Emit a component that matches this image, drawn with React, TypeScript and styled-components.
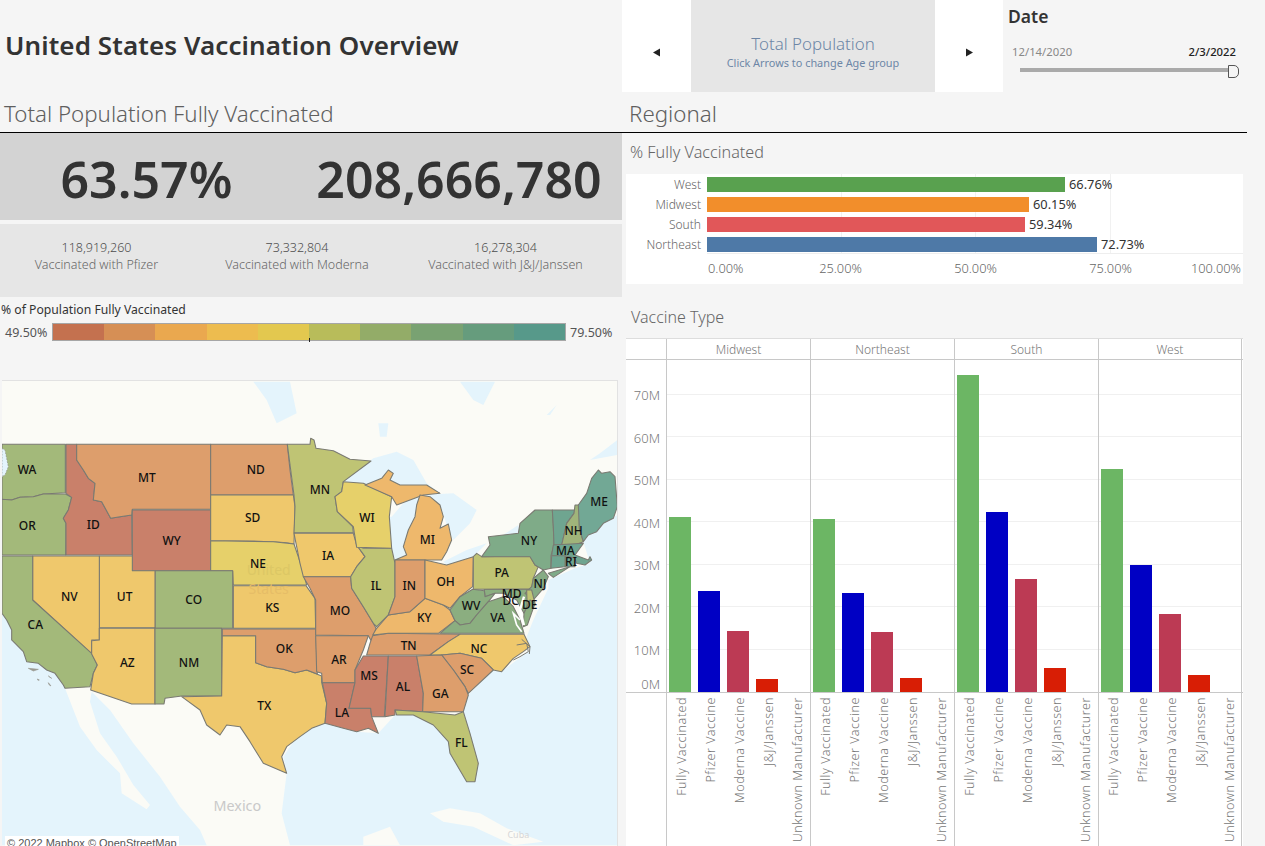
import React from "react";
import styled, { createGlobalStyle } from "styled-components";

const FONT = `"Noto Sans", "Open Sans", sans-serif`;

const Global = createGlobalStyle`
  html, body { margin: 0; padding: 0; background: #f5f5f5; }
  * { box-sizing: border-box; }
`;

const Page = styled.div`
  width: 1265px; height: 846px; overflow: hidden; display: flex;
  background: #f5f5f5; font-family: ${FONT}; color: #555;
`;
const LeftCol = styled.div`width: 622px; display: flex; flex-direction: column; flex: none;`;
const RightCol = styled.div`width: 643px; display: flex; flex-direction: column; flex: none;`;
const TitleBar = styled.div`height: 92px; display: flex; align-items: center; padding: 0 0 2px 5px;`;
const Title = styled.h1`
  margin: 0; font-size: 26px; font-weight: 600; color: #333; letter-spacing: 0.1px; white-space: nowrap;
`;
const SectionHead = styled.div<{ $pad: number; $w: number }>`
  height: 41px; width: ${p => p.$w}px; padding-left: ${p => p.$pad}px; border-bottom: 1px solid #000;
  font-size: 22.3px; font-weight: 300; color: #5f5f5f; line-height: 43px; white-space: nowrap;
`;
const KpiBand = styled.div`
  height: 87px; background: #d3d3d3; display: flex; align-items: center;
  font-size: 50px; font-weight: 600; color: #333; line-height: 1; padding-top: 5px;
`;
const KpiPct = styled.div`width: 293px; text-align: center;`;
const KpiCount = styled.div`width: 329px; text-align: center; padding-left: 3px; white-space: nowrap;`;
const SubBand = styled.div`
  margin-top: 4px; height: 73px; background: #e6e6e6; display: grid;
  grid-template-columns: 193px 208px 209px; padding-top: 15px;
`;
const SubCell = styled.div`text-align: center; font-size: 12.5px; font-weight: 300; line-height: 17px; color: #666; white-space: nowrap;`;
const SubNum = styled.div`color: #4d4d4d; font-size: 12.5px;`;
const LegendTitle = styled.div`
  margin: 5px 0 0 1px; font-size: 12.2px; line-height: 16px; color: #333; font-weight: 400; white-space: nowrap;
`;
const LegendRow = styled.div`
  margin-top: 5px; height: 18px; display: flex; align-items: center;
  font-size: 12.5px; color: #555;
`;
const LegendLow = styled.div`width: 52px; padding-left: 5px;`;
const LegendHigh = styled.div`padding-left: 4px;`;
const Ramp = styled.div`
  position: relative; width: 514px; height: 18px; display: flex; border: 1px solid #a6a6a6;
  &::after { content: ""; position: absolute; left: 256px; bottom: -2px; width: 1px; height: 4px; background: #222; }
`;
const RampStep = styled.div<{ $c: string }>`flex: 1; background: ${p => p.$c};`;
const MapFrame = styled.div`
  position: relative; margin: 39px 0 0 2px; width: 616px; height: 466px; overflow: hidden;
  border-top: 1px solid #e2e2e2; border-right: 1px solid #e2e2e2; background: #fbfbf6;
`;
const MapSvg = styled.svg`display: block; width: 616px; height: 465px;`;
const Attribution = styled.div`
  position: absolute; left: 3px; bottom: -4px; padding: 0 2px; background: #fff; font-size: 11px; line-height: 14px;
  font-family: "Liberation Sans", Arial, sans-serif; color: #555; white-space: nowrap;
`;

const NavRow = styled.div`height: 92px; display: flex;`;
const NavArrow = styled.div`
  background: #fff; width: 69px; display: flex; align-items: center; justify-content: center; font-size: 0; padding-top: 12px;
`;
const NavArrowRight = styled(NavArrow)`width: 68px;`;
const NavCenter = styled.div`
  width: 244px; background: #e6e6e6; display: flex; flex-direction: column; align-items: center; padding-top: 33px;
  color: #6d86a6; white-space: nowrap;
`;
const NavTitle = styled.div`font-size: 16.9px; line-height: 22px; font-weight: 300;`;
const NavSub = styled.div`font-size: 10.9px; line-height: 15px;`;
const DatePanel = styled.div`flex: 1; padding: 4px 0 0 5px;`;
const DateTitle = styled.div`font-size: 17.5px; font-weight: 600; color: #333; line-height: 24px;`;
const DateValues = styled.div`
  width: 224px; margin: 16px 0 0 4px; display: flex; justify-content: space-between;
  font-size: 11.3px; line-height: 15px; color: #888;
`;
const DateEnd = styled.span`color: #222; font-weight: 500;`;
const Slider = styled.div`
  position: relative; margin: 9px 0 0 12px; width: 212px; height: 4px; background: #aaa;
  &::after { content: ""; position: absolute; right: -7px; top: -3px; width: 9px; height: 11px;
    background: #f5f5f5; border: 1px solid #555; border-radius: 0 5px 5px 0; }
`;

const ChartTitle = styled.div`
  margin: 8px 0 0 8px; font-size: 16.2px; line-height: 22px; color: #666; font-weight: 300; white-space: nowrap;
`;
const BarPanel = styled.div`
  margin: 11px 0 0 4px; width: 617px; height: 110px; background: #fff; display: flex; flex-direction: column;
`;
const BarPlot = styled.div`
  position: relative; margin-left: 81px; height: 80px; padding-top: 3px; display: flex; flex-direction: column;
  gap: 5px; border-bottom: 1px solid #eee;
`;
const GridV = styled.div<{ $l: number }>`position: absolute; top: 0; bottom: 0; left: ${p => p.$l}px; width: 1px; background: #f1f1f1;`;
const BarLine = styled.div`position: relative; height: 15px; display: flex; align-items: center; z-index: 1;`;
const BarName = styled.div`
  position: absolute; right: 100%; padding-right: 6px; font-size: 12px; color: #666; line-height: 15px; font-weight: 300;
`;
const Bar = styled.div<{ $c: string }>`height: 15px; background: ${p => p.$c};`;
const BarVal = styled.div`padding-left: 4px; font-size: 12.8px; color: #333; line-height: 15px;`;
const BarAxis = styled.div`
  margin: 0 2px 0 82px; display: grid; grid-template-columns: 65px 135px 135px 135px 1fr; font-size: 12.8px; font-weight: 300; color: #666;
  line-height: 15px; padding-top: 7px; text-align: center;
  & > :first-child { text-align: left; }
  & > :last-child { text-align: right; }
`;
const SectionGap = styled.div`height: 22px;`;
const TypeTitle = styled(ChartTitle)`margin: 0 0 0 9px; font-size: 16px;`;
const TypePanel = styled.div`margin: 10px 0 0 4px; width: 617px; height: 508px; background: #fff; display: flex; flex-direction: column;`;
const HeaderRow = styled.div`
  height: 22px; display: grid; grid-template-columns: 40px repeat(4, 144px); border-bottom: 1px solid #c8c8c8; flex: none;
  border-top: 1px solid #ddd;
`;
const HeaderCell = styled.div`
  border-left: 1px solid #c8c8c8; font-size: 12px; color: #777; font-weight: 300; text-align: center; line-height: 21px;
  &:last-child { border-right: 1px solid #c8c8c8; }
`;
const PlotRow = styled.div`height: 333px; display: grid; grid-template-columns: 40px repeat(4, 144px); border-bottom: 1px solid #c8c8c8; flex: none;`;
const YAxis = styled.div`position: relative;`;
const YTick = styled.div`
  position: absolute; right: 6px; font-size: 13px; font-weight: 300; color: #777; line-height: 14px;
`;
const Facet = styled.div`
  position: relative; border-left: 1px solid #c8c8c8; display: flex; align-items: flex-end; gap: 7px; padding-left: 2px;
  &:last-child { border-right: 1px solid #c8c8c8; }
`;
const GridH = styled.div<{ $b: number }>`position: absolute; left: 0; right: 0; bottom: ${p => p.$b}px; height: 1px; background: #f0f0f0;`;
const VBar = styled.div<{ $c: string }>`position: relative; width: 22px; flex: none; background: ${p => p.$c};`;
const LabelRow = styled.div`flex: 1; display: grid; grid-template-columns: 40px repeat(4, 144px); min-height: 0;`;
const LabelFacet = styled.div`
  border-left: 1px solid #c8c8c8; display: flex;
  &:last-child { border-right: 1px solid #c8c8c8; }
`;
const VLabel = styled.div`
  width: 29px; flex: none; padding-top: 4px; display: flex; justify-content: center; align-items: flex-start;
  font-size: 12.5px; font-weight: 300; color: #777;
`;
const VText = styled.span`
  writing-mode: vertical-rl; transform: rotate(180deg); white-space: nowrap; line-height: 15px; letter-spacing: 0.55px;
`;

const ramp = ["#c4714f", "#d68f55", "#eaa84f", "#edbc4f", "#e3c84f", "#b8bc5a", "#93ac68", "#79a272", "#669c7d", "#57998a"];

const regions = [
  { n: "West", v: 66.76, c: "#59a14f" },
  { n: "Midwest", v: 60.15, c: "#f28e2b" },
  { n: "South", v: 59.34, c: "#e15759" },
  { n: "Northeast", v: 72.73, c: "#4e79a7" },
];

const vColors = ["#6cb664", "#0000c4", "#bc3a54", "#d81e05"];
const vNames = ["Fully Vaccinated", "Pfizer Vaccine", "Moderna Vaccine", "J&J/Janssen", "Unknown Manufacturer"];
const facets = [
  { n: "Midwest", h: [175, 101, 61, 13] },
  { n: "Northeast", h: [173, 99, 60, 14] },
  { n: "South", h: [317, 180, 113, 24] },
  { n: "West", h: [223, 127, 78, 17] },
];
const yTicks = [
  { l: "70M", t: 28 }, { l: "60M", t: 71 }, { l: "50M", t: 113 }, { l: "40M", t: 156 },
  { l: "30M", t: 198 }, { l: "20M", t: 241 }, { l: "10M", t: 283 }, { l: "0M", t: 317 },
];

const C = {
  g1: "#a3b97a", r: "#c9806a", o: "#dd9e6c", y: "#efc86c", y2: "#e6d06a", g2: "#bfc474",
  o2: "#eeb86c", g3: "#8bae80", g4: "#7fab88", t1: "#6fa590", t2: "#72a895", g5: "#a0b47a", g6: "#86ab84",
};

const west: [string, string][] = [
  ["WA", "6,193 196,193 196,338 130,342 100,350 60,352 35,360 6,358"],
  ["OR", "6,358 35,360 60,352 100,350 130,342 196,342 215,352 205,390 190,415 198,430 197,525 6,525"],
  ["ID", "198,193 230,193 230,240 250,270 265,295 285,310 280,360 305,365 332,415 360,410 395,405 397,525 198,525 198,430 190,415 205,390 215,352 198,340"],
  ["MT", "230,193 632,193 632,388 397,388 395,405 360,410 332,415 305,365 280,360 285,310 265,295 250,270 230,240"],
  ["WY", "397,390 632,390 632,572 397,572"],
  ["ND", "632,193 862,193 870,270 880,345 632,345"],
  ["SD", "632,345 880,345 885,380 882,492 860,488 820,485 632,482"],
  ["NE", "632,482 820,485 882,492 905,560 920,615 700,615 698,572 632,572"],
  ["KS", "700,617 918,617 945,655 947,745 700,745"],
  ["CO", "465,572 698,572 698,745 465,745"],
  ["UT", "298,528 397,528 397,572 465,572 465,743 298,743"],
  ["NV", "98,528 298,528 298,780 275,780 275,822 98,660"],
  ["CA", "6,528 98,528 98,660 275,820 292,855 280,880 270,920 195,925 190,915 165,880 140,870 115,850 80,845 70,815 35,780 35,750 20,720 6,700"],
  ["AZ", "298,745 465,745 465,972 395,972 272,930 280,880 292,855 275,822 275,782 298,780"],
  ["NM", "465,745 665,745 665,948 545,948 495,955 492,972 465,972"],
  ["TX", "667,767 767,767 767,848 800,860 850,868 885,878 920,870 965,888 965,908 980,970 975,1030 935,1045 900,1070 860,1100 845,1130 860,1180 790,1150 750,1085 720,1040 680,1035 660,1065 620,1035 600,990 545,950 665,948"],
  ["OK", "667,747 947,747 952,882 920,870 885,878 850,868 800,860 767,848 767,767 667,767"],
];
const east: [string, string][] = [
  ["MN", "-38,193 30,193 32,175 42,180 48,205 100,212 150,238 213,243 130,305 125,335 105,350 112,395 158,440 160,458 -18,458 -15,380 -18,345"],
  ["IA", "-18,460 160,460 170,495 195,530 170,560 152,590 10,590 0,550"],
  ["MO", "10,590 152,590 155,625 190,680 220,730 228,745 215,785 205,767 47,765 47,660 30,625"],
  ["AR", "47,767 205,767 190,810 165,870 165,908 67,908 65,880 50,875"],
  ["LA", "67,908 165,908 147,985 212,985 215,1010 235,1060 205,1045 170,1055 130,1045 75,1030 80,970"],
  ["MS", "190,828 265,828 253,1010 215,1010 212,985 147,985 165,908 165,870"],
  ["AL", "265,828 350,828 370,940 368,995 285,990 285,1005 255,1010"],
  ["TN", "200,825 210,790 218,767 265,760 480,763 445,785 390,825"],
  ["KY", "218,765 230,745 265,705 330,695 375,655 430,675 450,690 465,722 415,760 265,760"],
  ["IL", "190,505 275,505 285,550 285,650 265,705 230,740 220,730 190,680 155,625 152,590 170,560 195,530 170,495"],
  ["WI", "130,305 190,310 275,350 268,410 275,505 170,502 160,440 112,395 105,350 125,335"],
  ["MI", "195,315 245,295 265,270 280,280 270,300 300,315 380,315 420,340 370,345 290,375 275,350"],
  ["MI", "285,540 320,525 310,500 325,450 345,410 350,375 360,345 390,350 420,375 430,410 420,445 445,432 455,480 440,515 425,540"],
  ["IN", "285,540 375,540 375,655 330,695 265,705 285,650"],
  ["OH", "375,540 440,555 520,530 518,620 480,650 450,685 430,675 375,655"],
  ["MD", "553,628 695,628 690,660 672,700 650,660 610,640 585,640 555,650"],
  ["WV", "518,628 553,632 555,650 585,640 565,665 530,705 510,730 480,735 465,722 450,690 480,650"],
  ["VA", "420,760 465,722 480,735 510,730 530,705 565,665 610,650 640,680 660,720 672,760"],
  ["NC", "390,825 445,785 480,763 672,763 690,800 670,815 640,835 605,875 580,870 545,835 480,820 425,825"],
  ["SC", "425,825 480,820 545,835 580,870 505,940 495,920 460,870"],
  ["GA", "350,828 425,825 460,870 495,920 505,945 490,995 368,995 370,940"],
  ["FL", "285,990 368,995 465,1005 490,995 510,1060 535,1150 525,1205 500,1205 450,1120 445,1085 400,1035 340,1005 290,1005"],
  ["PA", "520,530 530,520 545,530 690,528 705,555 715,560 700,595 695,627 520,628"],
  ["NY", "660,430 705,390 757,390 760,440 762,495 753,527 753,565 730,570 705,555 690,530 545,530 570,495 565,470 655,460"],
  ["NY", "745,580 810,560 760,592"],
  ["NJ", "700,595 730,570 745,590 730,625 700,660 675,640 695,620"],
  ["DE", "680,630 695,630 705,670 682,695"],
  ["MD2", "672,700 690,660 705,670 682,735 670,740"],
  ["VT", "757,390 825,390 822,400 800,430 785,495 762,495 760,440"],
  ["NH", "825,375 838,375 838,445 850,485 825,495 785,495 800,430 822,400"],
  ["ME", "835,375 860,340 875,295 895,270 905,280 930,275 945,290 952,380 940,415 910,430 890,455 865,465 850,485 838,445"],
  ["MA", "760,495 850,490 825,525 865,540 870,530 875,540 855,555 830,550 825,535 755,527"],
  ["RI", "795,527 825,535 825,560 795,560"],
  ["CT", "755,527 795,527 795,560 753,565"],
];
const colorOf: Record<string, string> = {
  WA: C.g1, OR: C.g1, CA: C.g1, CO: C.g1, NM: C.g1, ID: C.r, WY: C.r, MS: C.r, AL: C.r, LA: C.r,
  MT: C.o, ND: C.o, MO: C.o, AR: C.o, TN: C.o, IN: C.o, OK: C.o, GA: C.o, SC: C.o,
  SD: C.y, NV: C.y, UT: C.y, AZ: C.y, TX: C.y, KS: C.y, IA: C.y, NC: C.y,
  NE: C.y2, WI: C.y2, MN: C.g2, IL: C.g2, FL: C.g2, PA: C.g2, MI: C.o2, OH: C.o2, KY: C.o2,
  WV: C.g3, VA: C.g3, NY: C.g4, VT: C.t1, MA: C.t1, RI: C.t1, CT: C.t1, ME: C.t2, NH: C.g5, NJ: C.g6, MD: C.g3, MD2: C.g3, DE: C.g2,
};
const labels: [string, number, number][] = [
  ["WA", 81, 269], ["OR", 82, 437], ["ID", 280, 434], ["MT", 441, 293], ["WY", 515, 482], ["ND", 767, 269],
  ["SD", 758, 413], ["NE", 774, 551], ["KS", 817, 683], ["CO", 581, 658], ["UT", 374, 650], ["NV", 208, 650],
  ["CA", 106, 734], ["AZ", 382, 848], ["NM", 567, 848], ["OK", 853, 806], ["TX", 793, 977],
  ["MN", 960, 329], ["IA", 984, 527], ["MO", 1020, 692], ["AR", 1017, 839], ["LA", 1026, 998], ["MS", 1107, 887],
  ["AL", 1209, 920], ["TN", 1226, 797], ["KY", 1273, 713], ["IL", 1128, 617], ["WI", 1101, 413], ["MI", 1282, 479],
  ["IN", 1228, 617], ["OH", 1337, 605], ["WV", 1413, 677], ["VA", 1493, 713], ["NC", 1437, 806], ["SC", 1401, 869],
  ["GA", 1321, 941], ["FL", 1384, 1089], ["PA", 1505, 578], ["NY", 1587, 482], ["NJ", 1620, 611], ["MD", 1535, 641],
  ["DC", 1532, 663], ["DE", 1589, 674], ["NH", 1721, 452], ["MA", 1696, 512], ["RI", 1713, 545], ["ME", 1797, 365],
];

const oceanWest = "6,700 20,720 35,750 35,780 70,815 80,845 115,850 140,870 165,880 190,915 195,925 240,1040 290,1110 360,1180 365,1240 440,1288 450,1275 400,1215 350,1130 300,1060 270,965 275,935 330,990 400,1090 480,1190 540,1280 600,1350 620,1396 0,1396 0,700";
const oceanEast = "-40,1180 -55,1300 -30,1396 960,1396 960,400 910,430 890,455 865,465 850,485 870,550 825,565 745,600 745,625 700,720 680,770 690,810 605,875 580,870 505,945 490,995 510,1060 535,1150 525,1205 500,1205 450,1120 445,1085 400,1035 340,1005 285,1005 235,1060 170,1055 75,1030 35,1045 -20,1085 -50,1130";
const lakes = [
  "135,300 220,235 290,215 340,240 380,310 420,340 300,315 270,300 280,280 265,270 245,295 195,315 130,305",
  "275,410 310,370 355,345 350,420 315,490 320,525 285,540 275,505 268,410",
  "370,345 460,340 530,390 510,430 460,480 440,435 425,385",
  "430,545 500,510 560,490 520,530 440,555",
  "570,490 655,435 660,460 570,495",
  "480,5 585,5 550,75 520,60",
  "235,130 265,130 260,170 240,170",
  "952,180 900,220 870,240 952,225",
  "740,105 770,75 750,105",
  "-140,5 -30,5 -10,100 -70,130 -100,60",
];
const land = [
  "390,1300 450,1285 540,1300 620,1345 730,1385 640,1396 520,1340 430,1325",
  "190,1370 270,1340 300,1396 190,1396",
];
const islands = ["85,865 115,868 100,873", "145,888 155,895 150,892", "112,897 118,900 114,901", "145,908 153,918 147,914"];

const StateShape: React.FC<{ name: string; pts: string }> = ({ name, pts }) => (
  <polygon points={pts} fill={colorOf[name]} stroke="#7a7a72" strokeWidth={3.2} strokeLinejoin="round" />
);

const UsMap = () => (
  <MapSvg viewBox="2 381 616 465">
    <rect x={0} y={381} width={620} height={465} fill="#fbfbf6" />
    <g transform="translate(0 380) scale(0.33333)">
      <polygon points={oceanWest} fill="#e4f4fc" />
      {islands.map((p, i) => <polygon key={i} points={p} fill="#9a9a92" stroke="#9a9a92" strokeWidth={2} />)}
    </g>
    <g transform="translate(300 380) scale(0.33333)">
      <polygon points={oceanEast} fill="#e4f4fc" />
      {lakes.map((p, i) => <polygon key={i} points={p} fill="#e4f4fc" />)}
      {land.map((p, i) => <polygon key={i} points={p} fill="#fbfbf6" />)}
    </g>
    <g transform="translate(0 380) scale(0.33333)">
      {west.map(([n, p], i) => <StateShape key={i} name={n} pts={p} />)}
      <polygon points="6,205 15,210 25,260 15,285 6,290" fill="#e4f4fc" stroke="#8d8d85" strokeWidth={2} strokeDasharray="5 4" />
      <text x={806} y={584} textAnchor="middle" fontSize={42} fill="#dcc765" fontFamily={FONT}>United</text>
      <text x={806} y={642} textAnchor="middle" fontSize={42} fill="#e6bd67" fontFamily={FONT}>States</text>
      <text x={712} y={1292} textAnchor="middle" fontSize={43} fill="#c9c9c9" fontFamily={FONT}>Mexico</text>
      <text x={1555} y={1374} textAnchor="middle" fontSize={27} fill="#d6d6d6" fontFamily={FONT}>Cuba</text>
    </g>
    <g transform="translate(300 380) scale(0.33333)">
      {east.map(([n, p], i) => <StateShape key={i} name={n} pts={p} />)}
      <polyline points="660,720 640,700 650,735 665,755" fill="none" stroke="#fff" strokeWidth={5} />
      <polyline points="672,650 660,690 672,735" fill="none" stroke="#fff" strokeWidth={7} />
      <polyline points="650,795 680,790 685,815 660,830 640,840" fill="none" stroke="#7a7a72" strokeWidth={3} />
      <polyline points="665,778 690,800 688,822" fill="none" stroke="#7a7a72" strokeWidth={3} />
    </g>
    <g transform="translate(0 380) scale(0.33333)">
      {labels.map(([n, x, y]) => (
        <text key={n} x={x} y={y + 13} textAnchor="middle" fontSize={36} fontWeight={500} fill="#111" fontFamily={FONT}>{n}</text>
      ))}
    </g>
  </MapSvg>
);

const Tri: React.FC<{ dir: "l" | "r" }> = ({ dir }) => (
  <svg width={9} height={9} viewBox="0 0 9 9">
    <polygon points={dir === "l" ? "8,0.5 8,8.5 1,4.5" : "1,0.5 1,8.5 8,4.5"} fill="#222" />
  </svg>
);

export default function App() {
  return (
    <Page>
      <Global />
      <LeftCol>
        <TitleBar><Title>United States Vaccination Overview</Title></TitleBar>
        <SectionHead $pad={4} $w={622}>Total Population Fully Vaccinated</SectionHead>
        <KpiBand>
          <KpiPct>63.57%</KpiPct>
          <KpiCount>208,666,780</KpiCount>
        </KpiBand>
        <SubBand>
          <SubCell><SubNum>118,919,260</SubNum>Vaccinated with Pfizer</SubCell>
          <SubCell><SubNum>73,332,804</SubNum>Vaccinated with Moderna</SubCell>
          <SubCell><SubNum>16,278,304</SubNum>Vaccinated with J&amp;J/Janssen</SubCell>
        </SubBand>
        <LegendTitle>% of Population Fully Vaccinated</LegendTitle>
        <LegendRow>
          <LegendLow>49.50%</LegendLow>
          <Ramp>{ramp.map(c => <RampStep key={c} $c={c} />)}</Ramp>
          <LegendHigh>79.50%</LegendHigh>
        </LegendRow>
        <MapFrame>
          <UsMap />
          <Attribution>© 2022 Mapbox © OpenStreetMap</Attribution>
        </MapFrame>
      </LeftCol>
      <RightCol>
        <NavRow>
          <NavArrow><Tri dir="l" /></NavArrow>
          <NavCenter>
            <NavTitle>Total Population</NavTitle>
            <NavSub>Click Arrows to change Age group</NavSub>
          </NavCenter>
          <NavArrowRight><Tri dir="r" /></NavArrowRight>
          <DatePanel>
            <DateTitle>Date</DateTitle>
            <DateValues><span>12/14/2020</span><DateEnd>2/3/2022</DateEnd></DateValues>
            <Slider />
          </DatePanel>
        </NavRow>
        <SectionHead $pad={7} $w={625}>Regional</SectionHead>
        <ChartTitle>% Fully Vaccinated</ChartTitle>
        <BarPanel>
          <BarPlot>
            {[134, 268, 403].map(l => <GridV key={l} $l={l} />)}
            {regions.map(r => (
              <BarLine key={r.n}>
                <BarName>{r.n}</BarName>
                <Bar $c={r.c} style={{ width: (r.v * 5.36).toFixed(0) + "px" }} />
                <BarVal>{r.v.toFixed(2)}%</BarVal>
              </BarLine>
            ))}
          </BarPlot>
          <BarAxis>
            <span>0.00%</span><span>25.00%</span><span>50.00%</span><span>75.00%</span><span>100.00%</span>
          </BarAxis>
        </BarPanel>
        <SectionGap />
        <TypeTitle>Vaccine Type</TypeTitle>
        <TypePanel>
          <HeaderRow>
            <div />
            {facets.map(f => <HeaderCell key={f.n}>{f.n}</HeaderCell>)}
          </HeaderRow>
          <PlotRow>
            <YAxis>{yTicks.map(t => <YTick key={t.l} style={{ top: t.t }}>{t.l}</YTick>)}</YAxis>
            {facets.map(f => (
              <Facet key={f.n}>
                {[42.5, 85, 127.5, 170, 212.5, 255, 297.5].map(b => <GridH key={b} $b={b} />)}
                {f.h.map((h, i) => <VBar key={i} $c={vColors[i]} style={{ height: h }} />)}
              </Facet>
            ))}
          </PlotRow>
          <LabelRow>
            <div />
            {facets.map(f => (
              <LabelFacet key={f.n}>
                {vNames.map(n => <VLabel key={n}><VText>{n}</VText></VLabel>)}
              </LabelFacet>
            ))}
          </LabelRow>
        </TypePanel>
      </RightCol>
    </Page>
  );
}
